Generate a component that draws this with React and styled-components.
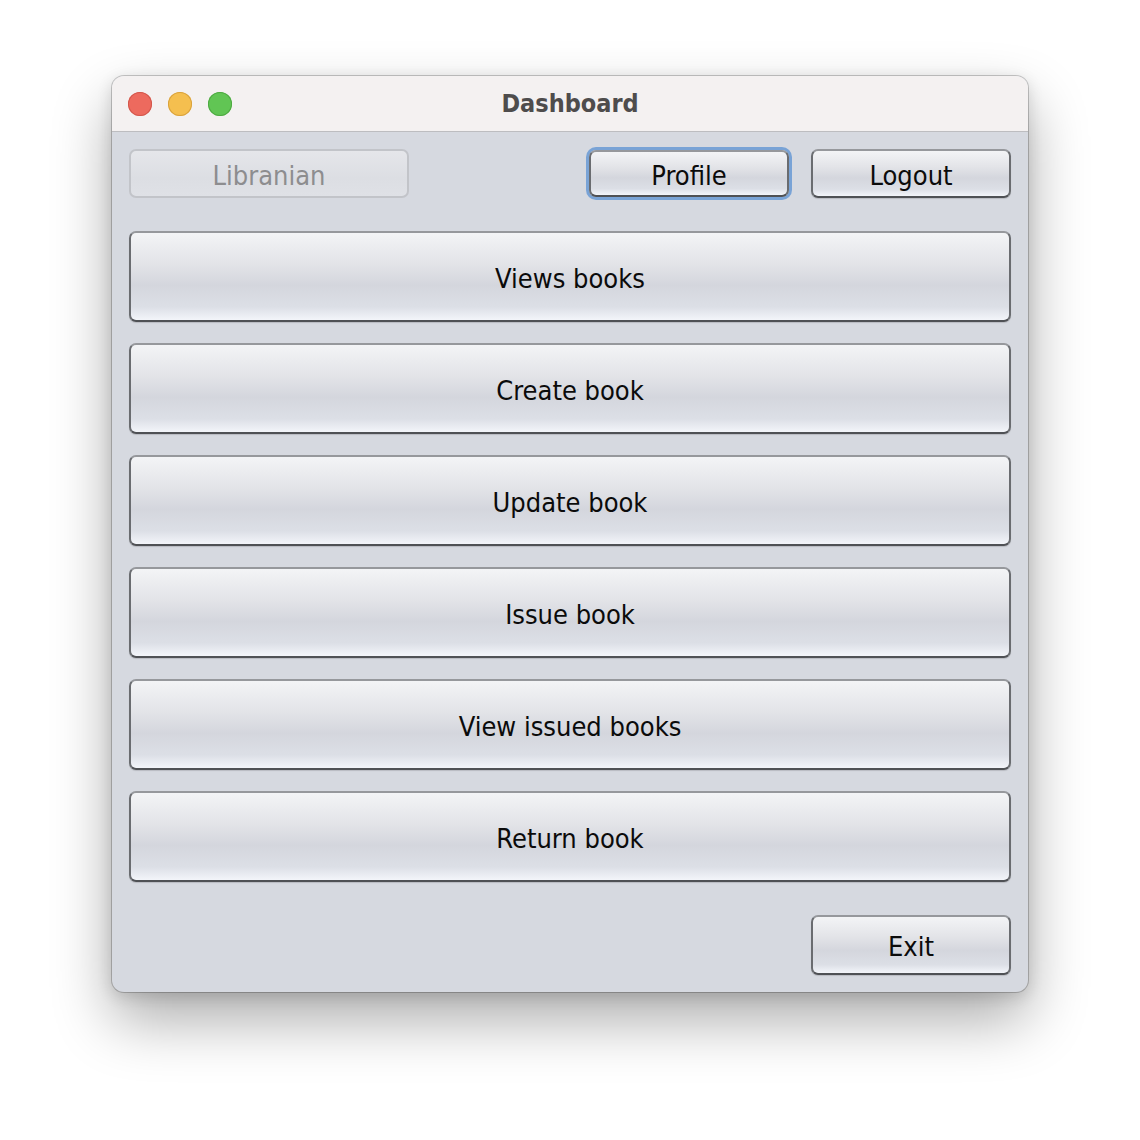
import React from "react";
import styled, { createGlobalStyle } from "styled-components";

const GlobalStyle = createGlobalStyle`
  html, body {
    margin: 0;
    padding: 0;
    background: #ffffff;
  }
  body {
    font-family: "DejaVu Sans Condensed", "DejaVu Sans", "Noto Sans", sans-serif;
  }
`;

const Page = styled.div`
  width: 1140px;
  height: 1140px;
  padding: 76px 0 0 112px;
  box-sizing: border-box;
`;

const Window = styled.div`
  width: 916px;
  height: 916px;
  border-radius: 12px;
  overflow: hidden;
  background: #d6d9e0;
  box-shadow: 0 0 0 1px rgba(0, 0, 0, 0.2), 0 28px 60px rgba(0, 0, 0, 0.33),
    0 4px 16px rgba(0, 0, 0, 0.14);
  display: flex;
  flex-direction: column;
`;

const TitleBar = styled.div`
  height: 56px;
  flex-shrink: 0;
  background: #f4f1f1;
  border-bottom: 1px solid #bdbdc0;
  box-sizing: border-box;
  display: flex;
  align-items: center;
  position: relative;
  padding-left: 16px;
  gap: 16px;
`;

const Light = styled.div`
  width: 24px;
  height: 24px;
  border-radius: 50%;
  background: ${(p) => p.color};
  box-shadow: inset 0 0 0 1px ${(p) => p.edge};
`;

const Title = styled.div`
  position: absolute;
  left: 0;
  right: 0;
  text-align: center;
  font-family: "DejaVu Sans Condensed", "DejaVu Sans", sans-serif;
  font-size: 25px;
  font-weight: bold;
  color: #4e4c4c;
  pointer-events: none;
`;

const Body = styled.div`
  flex: 1;
  padding: 17px;
  display: flex;
  flex-direction: column;
`;

const TopRow = styled.div`
  display: flex;
  align-items: center;
  height: 49px;
`;

const Spacer = styled.div`
  flex: 1;
`;

const Button = styled.button`
  font-family: "DejaVu Sans Condensed", "DejaVu Sans", "Noto Sans", sans-serif;
  font-size: 27px;
  color: #0b0b0b;
  width: ${(p) => p.w || "100%"};
  height: ${(p) => p.h || "49px"};
  margin-left: ${(p) => p.ml || "0"};
  border-radius: 7px;
  border: 2px solid #6a6c70;
  border-top-color: #96989c;
  border-bottom-color: #4f5155;
  background: linear-gradient(
    to bottom,
    #f3f4f6 0%,
    #e3e4e8 35%,
    #d4d6dd 60%,
    #dcdfe6 85%,
    #f3f5fa 100%
  );
  box-shadow: 0 1px 1px rgba(0, 0, 0, 0.14);
  padding: 3px 0 0;
  display: flex;
  align-items: center;
  justify-content: center;
  box-sizing: border-box;
  flex-shrink: 0;

  &:disabled {
    color: #8d8d8f;
    border-color: #c2c4c9;
    background: linear-gradient(to bottom, #e5e6ea 0%, #dcdee3 60%, #dfe1e6 100%);
    box-shadow: none;
  }
`;

const FocusButton = styled(Button)`
  box-shadow: 0 0 0 3px #79a3d6;
`;

const MenuList = styled.div`
  margin-top: 33px;
  display: flex;
  flex-direction: column;
  gap: 21px;
`;

const BottomRow = styled.div`
  margin-top: 33px;
  display: flex;
  justify-content: flex-end;
`;

const items = [
  "Views books",
  "Create book",
  "Update book",
  "Issue book",
  "View issued books",
  "Return book",
];

export default function App() {
  return (
    <>
      <GlobalStyle />
      <Page>
        <Window>
          <TitleBar>
            <Light color="#ed6a5e" edge="#d2574c" />
            <Light color="#f5bf4f" edge="#d9a23d" />
            <Light color="#61c554" edge="#4ea942" />
            <Title>Dashboard</Title>
          </TitleBar>
          <Body>
            <TopRow>
              <Button w="280px" disabled>
                Libranian
              </Button>
              <Spacer />
              <FocusButton w="200px" h="47px">
                Profile
              </FocusButton>
              <Button w="200px" ml="22px">
                Logout
              </Button>
            </TopRow>
            <MenuList>
              {items.map((t) => (
                <Button key={t} h="91px">
                  {t}
                </Button>
              ))}
            </MenuList>
            <BottomRow>
              <Button w="200px" h="60px">
                Exit
              </Button>
            </BottomRow>
          </Body>
        </Window>
      </Page>
    </>
  );
}
